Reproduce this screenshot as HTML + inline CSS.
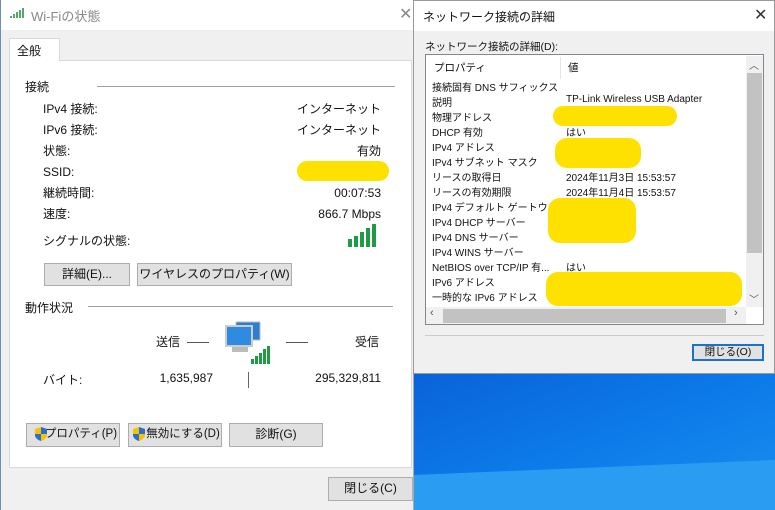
<!DOCTYPE html>
<html><head><meta charset="utf-8"><style>
*{margin:0;padding:0;box-sizing:border-box}
body{width:775px;height:510px;overflow:hidden;position:relative;font-family:"Liberation Sans","Noto Sans CJK JP",sans-serif;font-size:12px;color:#111;background:#0b72e0}
.abs{position:absolute}
.desk{left:413px;top:370px;width:362px;height:140px;background:linear-gradient(160deg,#0a62d8 0%,#0c7ae8 50%,#1b8ff0 100%)}
.desk2{left:413px;top:460px;width:362px;height:50px;background:#2a9cf2}
.win1{left:0;top:0;width:414px;height:510px;background:#f0f0f0;border-left:1px solid #6b8fb8;border-right:1px solid #aaa}
.tb{left:0;top:0;width:100%;height:30px;background:#fff}
.btn{position:absolute;background:#e1e1e1;border:1px solid #adadad;text-align:center;line-height:21px;font-size:12px}
.yel{position:absolute;background:#ffe100;border-radius:12px}
.r{position:absolute;font-size:10px;left:432px}
.v{position:absolute;font-size:10px;left:566px}
</style></head><body>
<div class="abs desk"></div>
<div class="abs desk2" style="clip-path:polygon(0 30%,100% 0,100% 100%,0 100%)"></div>
<div class="abs win1">
 <div class="abs tb"></div>
 <svg class="abs" style="left:9px;top:7px" width="16" height="12"><g fill="none" stroke="#1a8a3a" stroke-width="1.5"><path d="M1 11v-2M4 11v-4M7 11v-6M10 11v-8M13 11v-10"/></g></svg>
 <div class="abs" style="left:30px;top:6px;font-size:13px;color:#888">Wi-Fiの状態</div>
 <div class="abs" style="left:398px;top:4px;font-size:16px;color:#888">✕</div>
 <div class="abs" style="left:8px;top:38px;width:51px;height:23px;background:#fff;border:1px solid #d9d9d9;border-bottom:none;z-index:2;padding:3px 0 0 7px;font-size:12px">全般</div>
 <div class="abs" style="left:8px;top:60px;width:403px;height:408px;background:#fff;border:1px solid #d9d9d9"></div>
 <div class="abs" style="left:24px;top:78px">接続</div>
 <div class="abs" style="left:96px;top:86px;width:298px;height:1px;background:#a0a0a0"></div>
 <div class="abs" style="left:42px;top:99px;line-height:21px">IPv4 接続:<br>IPv6 接続:<br>状態:<br>SSID:<br>継続時間:<br>速度:</div>
 <div class="abs" style="left:250px;top:99px;width:130px;text-align:right;line-height:21px">インターネット<br>インターネット<br>有効<br>&nbsp;<br>00:07:53<br>866.7 Mbps</div>
 <div class="yel" style="left:296px;top:161px;width:92px;height:20px"></div>
 <div class="abs" style="left:42px;top:232px">シグナルの状態:</div>
 <svg class="abs" style="left:345px;top:222px" width="32" height="26"><g fill="#1f9a45"><rect x="2" y="17" width="4" height="8"/><rect x="8" y="14" width="4" height="11"/><rect x="14" y="10" width="4" height="15"/><rect x="20" y="6" width="4" height="19"/><rect x="26" y="2" width="4" height="23"/></g></svg>
 <div class="btn" style="left:43px;top:263px;width:86px;height:23px">詳細(E)...</div>
 <div class="btn" style="left:136px;top:263px;width:155px;height:23px">ワイヤレスのプロパティ(W)</div>
 <div class="abs" style="left:24px;top:299px">動作状況</div>
 <div class="abs" style="left:87px;top:306px;width:305px;height:1px;background:#a0a0a0"></div>
 <div class="abs" style="left:155px;top:333px">送信</div>
 <div class="abs" style="left:186px;top:342px;width:22px;height:1px;background:#555"></div>
 <div class="abs" style="left:285px;top:342px;width:22px;height:1px;background:#555"></div>
 <div class="abs" style="left:354px;top:333px">受信</div>
 <svg class="abs" style="left:223px;top:320px" width="50" height="46"><rect x="12" y="2" width="24" height="18" fill="#2a7fd0" stroke="#bbb"/><rect x="2" y="6" width="26" height="20" fill="#2f8be0" stroke="#ccc" stroke-width="2"/><rect x="8" y="27" width="16" height="5" fill="#bbb"/><g fill="#1f9a45"><rect x="27" y="39" width="3" height="5"/><rect x="31" y="36" width="3" height="8"/><rect x="35" y="33" width="3" height="11"/><rect x="39" y="29" width="3" height="15"/><rect x="43" y="26" width="3" height="18"/></g></svg>
 <div class="abs" style="left:42px;top:371px">バイト:</div>
 <div class="abs" style="left:140px;top:371px;width:72px;text-align:right">1,635,987</div>
 <div class="abs" style="left:247px;top:372px;width:1px;height:16px;background:#666"></div>
 <div class="abs" style="left:280px;top:371px;width:100px;text-align:right">295,329,811</div>
 <div class="btn" style="left:25px;top:423px;width:94px;height:24px;padding-left:16px;font-size:11.5px">プロパティ(P)</div>
 <div class="btn" style="left:127px;top:423px;width:94px;height:24px;padding-left:16px;font-size:11.5px">無効にする(D)</div>
 <svg class="abs" style="left:33px;top:426px" width="14" height="16"><path d="M7 1L13 3v6c0 3-3 5-6 6-3-1-6-3-6-6V3z" fill="#f5c400"/><path d="M7 1L13 3v5H7zM1 8h6v7c-3-1-6-3-6-6z" fill="#2a6fd0"/></svg>
 <svg class="abs" style="left:131px;top:426px" width="14" height="16"><path d="M7 1L13 3v6c0 3-3 5-6 6-3-1-6-3-6-6V3z" fill="#f5c400"/><path d="M7 1L13 3v5H7zM1 8h6v7c-3-1-6-3-6-6z" fill="#2a6fd0"/></svg>
 <div class="btn" style="left:228px;top:423px;width:94px;height:24px">診断(G)</div>
 <div class="btn" style="left:327px;top:477px;width:85px;height:24px">閉じる(C)</div>
</div>
<div class="abs" style="left:413px;top:0;width:362px;height:374px;background:#f0f0f0;border:1px solid #999">
 <div class="abs" style="left:0;top:0;width:360px;height:30px;background:#fff"></div>
 <div class="abs" style="left:9px;top:7px;font-size:12px">ネットワーク接続の詳細</div>
 <div class="abs" style="left:340px;top:4px;font-size:16px;color:#333">✕</div>
 <div class="abs" style="left:11px;top:38px;font-size:10.5px">ネットワーク接続の詳細(D):</div>
 <div class="abs" style="left:11px;top:53px;width:339px;height:271px;background:#fff;border:1px solid #828790"></div>
 <div class="abs" style="left:146px;top:56px;width:1px;height:22px;background:#e5e5e5"></div>
 <div class="abs" style="left:20px;top:59px;font-size:10.5px">プロパティ</div>
 <div class="abs" style="left:154px;top:59px;font-size:10.5px">値</div>
 <div class="abs" style="left:332px;top:55px;width:17px;height:251px;background:#f0f0f0"></div>
 <div class="abs" style="left:333px;top:72px;width:15px;height:180px;background:#c2c2c2"></div>
 <div class="abs" style="left:335px;top:56px;font-size:10px;color:#555">︿</div>
 <div class="abs" style="left:335px;top:290px;font-size:10px;color:#555">﹀</div>
 <div class="abs" style="left:12px;top:306px;width:320px;height:17px;background:#f0f0f0"></div>
 <div class="abs" style="left:29px;top:308px;width:283px;height:14px;background:#c2c2c2"></div>
 <div class="abs" style="left:16px;top:306px;font-size:11px;color:#555">‹</div>
 <div class="abs" style="left:320px;top:306px;font-size:11px;color:#555">›</div>
 <div class="abs" style="left:11px;top:334px;width:339px;height:1px;background:#ccc"></div>
 <div class="abs" style="left:278px;top:343px;width:72px;height:17px;background:#e1e1e1;border:2px solid #1a73c8;text-align:center;font-size:10.5px;line-height:13px">閉じる(O)</div>
</div>
<div class="r" style="top:79px">接続固有 DNS サフィックス</div>
<div class="r" style="top:94px">説明</div><div class="v" style="top:94px">TP-Link Wireless USB Adapter</div>
<div class="r" style="top:109px">物理アドレス</div>
<div class="r" style="top:124px">DHCP 有効</div><div class="v" style="top:124px">はい</div>
<div class="r" style="top:139px">IPv4 アドレス</div>
<div class="r" style="top:154px">IPv4 サブネット マスク</div>
<div class="r" style="top:169px">リースの取得日</div><div class="v" style="top:169px">2024年11月3日 15:53:57</div>
<div class="r" style="top:184px">リースの有効期限</div><div class="v" style="top:184px">2024年11月4日 15:53:57</div>
<div class="r" style="top:199px">IPv4 デフォルト ゲートウェイ</div>
<div class="r" style="top:214px">IPv4 DHCP サーバー</div>
<div class="r" style="top:229px">IPv4 DNS サーバー</div>
<div class="r" style="top:244px">IPv4 WINS サーバー</div>
<div class="r" style="top:259px">NetBIOS over TCP/IP 有...</div><div class="v" style="top:259px">はい</div>
<div class="r" style="top:274px">IPv6 アドレス</div>
<div class="r" style="top:289px">一時的な IPv6 アドレス</div>
<div class="yel" style="left:553px;top:106px;width:124px;height:20px"></div>
<div class="yel" style="left:555px;top:138px;width:86px;height:30px"></div>
<div class="yel" style="left:548px;top:198px;width:88px;height:45px"></div>
<div class="yel" style="left:546px;top:272px;width:196px;height:34px"></div>
</body></html>
